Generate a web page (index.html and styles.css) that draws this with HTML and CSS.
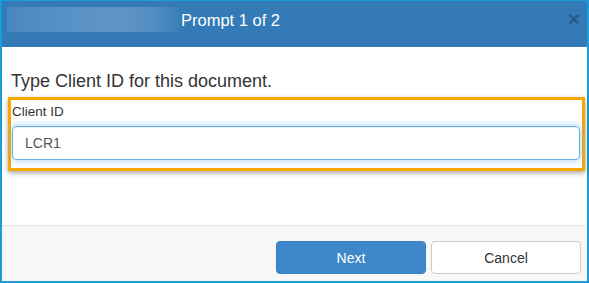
FILE: index.html
```html
<!DOCTYPE html>
<html>
<head>
<meta charset="utf-8">
<link rel="stylesheet" href="styles.css">
</head>
<body>
<div class="dialog">
  <div class="header">
    <div class="blur"></div>
    <div class="title">Prompt 1 of 2</div>
    <div class="close">×</div>
  </div>
  <div class="content">
    <p class="prompt">Type Client ID for this document.</p>
    <div class="highlight">
      <label class="label">Client ID</label>
      <div class="input">LCR1</div>
    </div>
  </div>
  <div class="footer">
    <button class="btn btn-primary">Next</button>
    <button class="btn btn-default">Cancel</button>
  </div>
</div>
</body>
</html>
```
FILE: styles.css
```css
html, body {
  margin: 0;
  padding: 0;
  background: #ffffff;
}
body {
  font-family: "Liberation Sans", Arial, sans-serif;
  color: #333333;
}
.dialog {
  width: 589px;
  height: 283px;
  box-sizing: border-box;
  border: 2px solid #1b9bd8;
  border-top-width: 1px;
  display: flex;
  flex-direction: column;
  background: #ffffff;
}
.header {
  height: 46px;
  flex: none;
  background: #337ab7;
  display: flex;
  align-items: flex-start;
  position: relative;
}
.blur {
  margin: 6px 0 0 5px;
  width: 173px;
  height: 25px;
  background: linear-gradient(90deg, #4a86bf 0%, #5a93c6 40%, #5d95c7 70%, #4f89c0 88%, #3a7eb9 100%);
}
.title {
  margin: 10px 0 0 1px;
  color: #ffffff;
  font-size: 16.5px;
  line-height: 19px;
}
.close {
  position: absolute;
  right: 7px;
  top: 7px;
  font-size: 21px;
  font-weight: bold;
  line-height: 21px;
  color: #000;
  opacity: 0.25;
}
.content {
  flex: 1;
  padding: 0 2px 0 6px;
}
.prompt {
  margin: 24px 0 6px 3px;
  font-size: 18px;
  line-height: 20px;
  color: #333;
}
.highlight {
  border: 3px solid #f7a800;
  box-shadow: 0 2px 5px rgba(0, 0, 0, 0.35);
  padding: 4px 2px 8px 1px;
  display: flex;
  flex-direction: column;
}
.label {
  font-size: 13.5px;
  line-height: 16px;
  color: #333;
  margin-bottom: 6px;
}
.input {
  height: 34px;
  box-sizing: border-box;
  border: 1px solid #66afe9;
  border-radius: 4px;
  box-shadow: inset 0 1px 1px rgba(0, 0, 0, 0.075), 0 0 8px rgba(102, 175, 233, 0.6);
  padding: 0 12px;
  font-size: 14px;
  line-height: 32px;
  color: #555;
}
.footer {
  flex: none;
  height: 56px;
  box-sizing: border-box;
  border-top: 1px solid #e5e5e5;
  background: #f7f7f7;
  display: flex;
  justify-content: flex-end;
  align-items: flex-start;
  gap: 5px;
  padding: 15px 6px 0 0;
}
.btn {
  width: 150px;
  height: 33px;
  border-radius: 4px;
  font-family: "Liberation Sans", Arial, sans-serif;
  font-size: 14px;
  padding: 0;
  margin: 0;
}
.btn-primary {
  background: #3e87c8;
  border: 1px solid #3a80be;
  color: #ffffff;
}
.btn-default {
  background: #ffffff;
  border: 1px solid #cccccc;
  color: #333333;
}
```
